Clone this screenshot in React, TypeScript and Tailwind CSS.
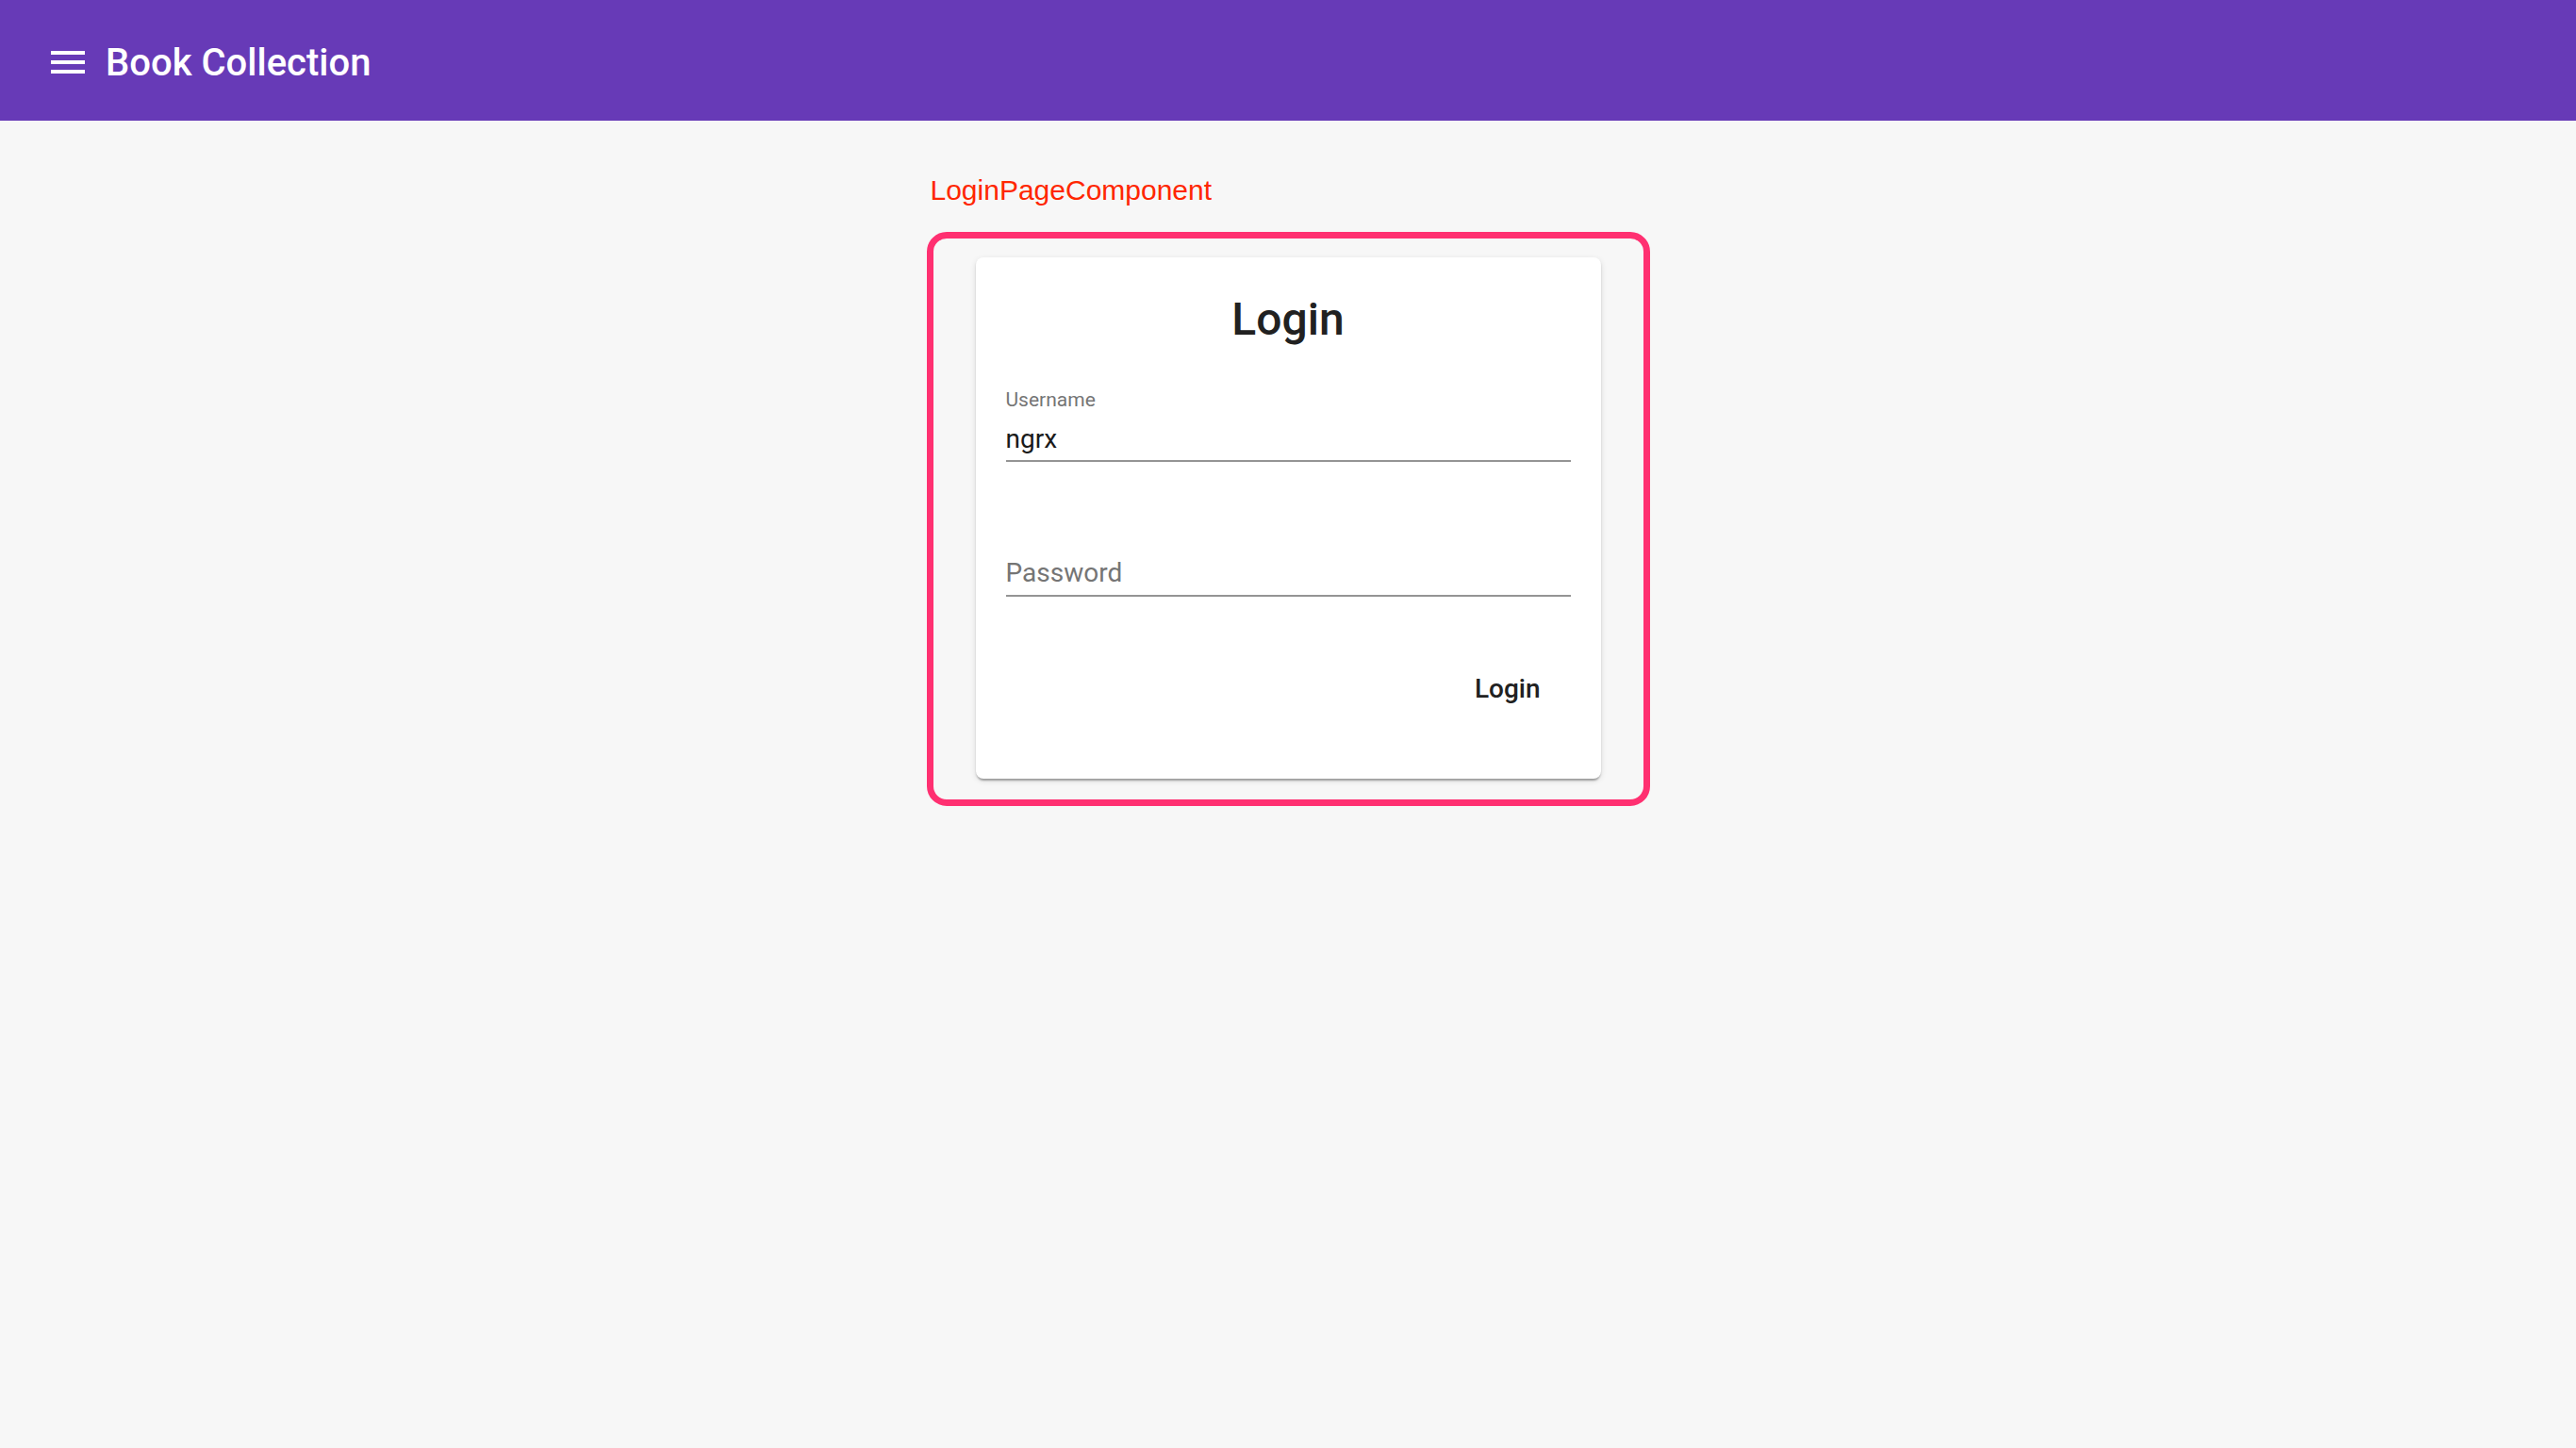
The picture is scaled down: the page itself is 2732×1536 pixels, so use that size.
import React from "react";

export default function App() {
  return (
    <div className="min-h-[1536px] w-full bg-[#f7f7f7]" style={{ fontFamily: "Roboto, 'Noto Sans', sans-serif" }}>
      <header className="h-[128px] w-full bg-[#673ab7] flex items-center pl-[48px]">
        <svg className="mt-[4px] w-[48px] h-[48px] shrink-0" viewBox="0 0 24 24" fill="#ffffff">
          <path d="M3 18h18v-2H3v2zm0-5h18v-2H3v2zm0-7v2h18V6H3z" />
        </svg>
        <h1 className="mt-[6px] ml-[16px] text-[40px] leading-[48px] font-medium text-white font-['Roboto',sans-serif]">
          Book Collection
        </h1>
      </header>
      <main className="flex flex-col items-center">
        <div className="w-[767px] mt-[57px]">
          <div className="ml-[4px] text-[30px] leading-[34px] text-[#ff2600] font-['Liberation_Sans',Arial,sans-serif]">
            LoginPageComponent
          </div>
          <div className="mt-[27px] border-[7px] border-[#ff3071] rounded-[21px] pt-[20px] px-[45px] pb-[22px]">
            <div className="bg-white rounded-[8px] shadow-[0_4px_2px_-2px_rgba(0,0,0,0.2),0_2px_2px_0_rgba(0,0,0,0.14),0_2px_6px_0_rgba(0,0,0,0.12)] pt-[38px] px-[32px] pb-[59px]">
              <h2 className="text-center text-[48px] leading-[56px] font-medium text-[#212121]">Login</h2>
              <div className="mt-[45px]">
                <div className="text-[21px] leading-[24px] text-[#757575]">Username</div>
                <div className="mt-[14px] text-[28px] leading-[32px] text-[#1a1a1a]">ngrx</div>
                <div className="mt-[6px] h-[2px] bg-[#949494]" />
              </div>
              <div className="mt-[102px]">
                <div className="text-[28px] leading-[32px] text-[#757575]">Password</div>
                <div className="mt-[7px] h-[2px] bg-[#949494]" />
              </div>
              <div className="mt-[62px] flex justify-end">
                <button className="h-[72px] px-[32px] text-[28px] leading-[72px] font-medium text-[#212121] rounded-[8px]">
                  Login
                </button>
              </div>
            </div>
          </div>
        </div>
      </main>
    </div>
  );
}
